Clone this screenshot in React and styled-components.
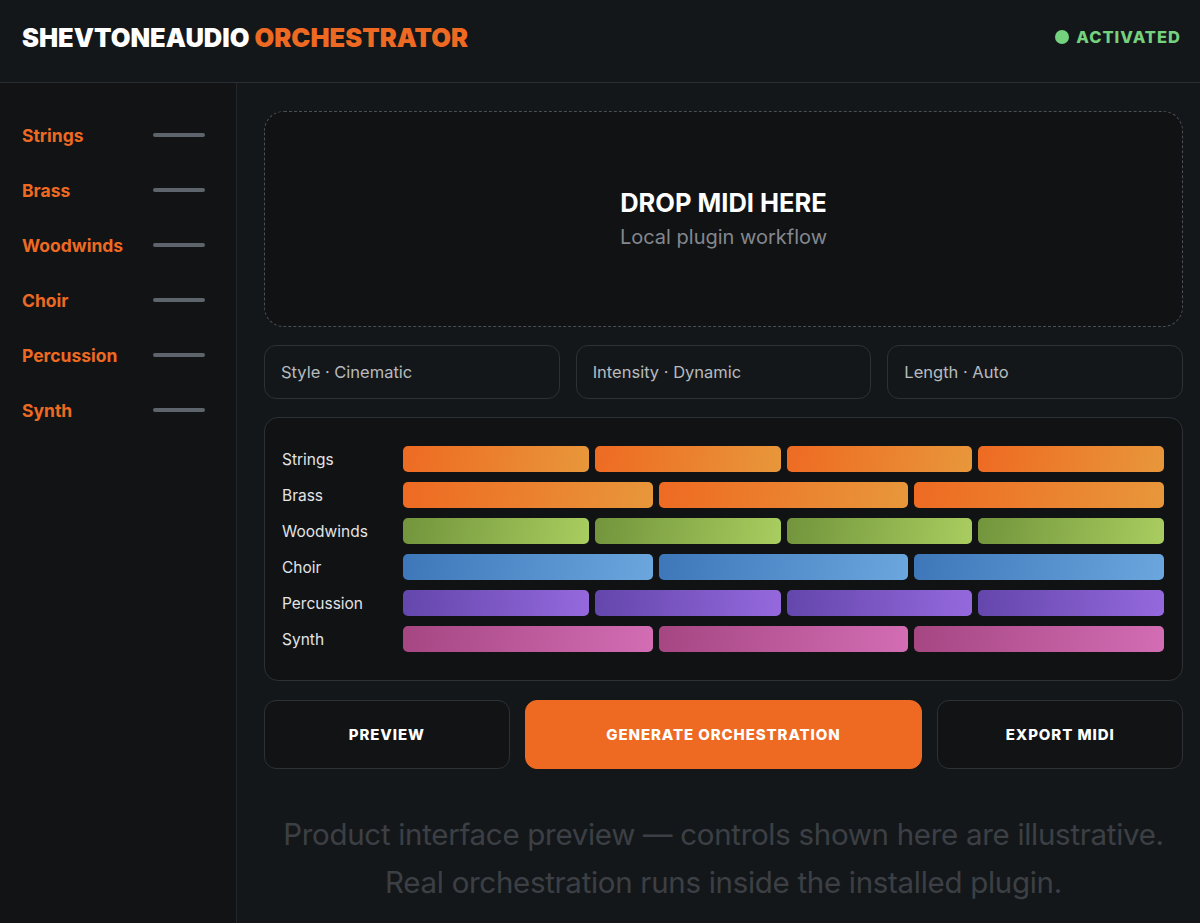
import React from 'react'
import styled, { createGlobalStyle } from 'styled-components'

const GlobalStyle = createGlobalStyle`
  html, body {
    margin: 0;
    padding: 0;
    background: #14171a;
  }
  * {
    box-sizing: border-box;
  }
`

const sections = ['Strings', 'Brass', 'Woodwinds', 'Choir', 'Percussion', 'Synth']

const lanes = [
  { name: 'Strings', parts: 4, from: '#ee6a22', to: '#e8973b' },
  { name: 'Brass', parts: 3, from: '#ee6a22', to: '#e8973b' },
  { name: 'Woodwinds', parts: 4, from: '#72943c', to: '#a9cd5f' },
  { name: 'Choir', parts: 3, from: '#3d77b9', to: '#6ba6de' },
  { name: 'Percussion', parts: 4, from: '#6346ab', to: '#9569dd' },
  { name: 'Synth', parts: 3, from: '#a54682', to: '#d36db4' },
]

const App = () => {
  return (
    <Page>
      <GlobalStyle />
      <Header>
        <Logo>
          SHEVTONEAUDIO <span>ORCHESTRATOR</span>
        </Logo>
        <Status>
          <Dot />
          ACTIVATED
        </Status>
      </Header>
      <Body>
        <Sidebar>
          {sections.map(name => (
            <SideItem key={name}>
              <SideLabel>{name}</SideLabel>
              <SideBar />
            </SideItem>
          ))}
        </Sidebar>
        <Main>
          <DropZone>
            <DropTitle>DROP MIDI HERE</DropTitle>
            <DropSub>Local plugin workflow</DropSub>
          </DropZone>
          <Selects>
            <Select>Style · Cinematic</Select>
            <Select>Intensity · Dynamic</Select>
            <Select>Length · Auto</Select>
          </Selects>
          <Tracks>
            {lanes.map(lane => (
              <Lane key={lane.name}>
                <LaneName>{lane.name}</LaneName>
                <Blocks parts={lane.parts}>
                  {Array.from({ length: lane.parts }).map((_, i) => (
                    <Block key={i} from={lane.from} to={lane.to} />
                  ))}
                </Blocks>
              </Lane>
            ))}
          </Tracks>
          <Actions>
            <Button>PREVIEW</Button>
            <Button primary>GENERATE ORCHESTRATION</Button>
            <Button>EXPORT MIDI</Button>
          </Actions>
          <Note>
            Product interface preview — controls shown here are illustrative.
            <br />
            Real orchestration runs inside the installed plugin.
          </Note>
        </Main>
      </Body>
    </Page>
  )
}

const Page = styled.div`
  width: 1200px;
  height: 923px;
  overflow: hidden;
  background: #14171a;
  font-family: Inter, 'Noto Sans', sans-serif;
  display: flex;
  flex-direction: column;
`

const Header = styled.header`
  height: 83px;
  flex-shrink: 0;
  display: flex;
  align-items: center;
  justify-content: space-between;
  padding: 0 19px 8px 22px;
  border-bottom: 1px solid #2a2d31;
`

const Logo = styled.div`
  font-size: 25.5px;
  font-weight: 900;
  color: #ffffff;
  letter-spacing: 0;

  span {
    color: #ee6a22;
  }
`

const Status = styled.div`
  display: flex;
  align-items: center;
  gap: 7px;
  font-size: 16.5px;
  font-weight: 800;
  color: #74d17d;
  letter-spacing: 1px;
`

const Dot = styled.span`
  width: 14px;
  height: 14px;
  border-radius: 50%;
  background: #74d17d;
`

const Body = styled.div`
  flex: 1;
  display: flex;
`

const Sidebar = styled.aside`
  width: 237px;
  flex-shrink: 0;
  background: #111315;
  border-right: 1px solid #23262a;
  padding: 40px 31px 0 22px;
  display: flex;
  flex-direction: column;
  gap: 31px;
`

const SideItem = styled.div`
  height: 24px;
  display: flex;
  align-items: center;
  justify-content: space-between;
`

const SideLabel = styled.span`
  font-size: 17.5px;
  font-weight: 700;
  color: #ee6a22;
`

const SideBar = styled.span`
  width: 52px;
  height: 4px;
  border-radius: 2px;
  background: #5e646b;
`

const Main = styled.main`
  flex: 1;
  padding: 28px 17px 0 27px;
  display: flex;
  flex-direction: column;
`

const DropZone = styled.div`
  height: 216px;
  border: 1.5px dashed #4a4f55;
  border-radius: 20px;
  background: #111214;
  display: flex;
  flex-direction: column;
  align-items: center;
  justify-content: center;
  gap: 7px;
  padding-bottom: 2px;
`

const DropTitle = styled.div`
  font-size: 25.5px;
  font-weight: 700;
  color: #ffffff;
`

const DropSub = styled.div`
  font-size: 20px;
  color: #83888e;
`

const Selects = styled.div`
  margin-top: 18px;
  display: grid;
  grid-template-columns: repeat(3, 1fr);
  gap: 16px;
`

const Select = styled.div`
  height: 54px;
  border: 1px solid #2d3135;
  border-radius: 12px;
  display: flex;
  align-items: center;
  padding: 0 16px;
  font-size: 16.5px;
  color: #b7bbbf;
`

const Tracks = styled.div`
  margin-top: 18px;
  height: 264px;
  border: 1px solid #2d3135;
  border-radius: 14px;
  background: #111214;
  padding: 28px 18px 0 17px;
  display: flex;
  flex-direction: column;
  gap: 10px;
`

const Lane = styled.div`
  height: 26px;
  display: flex;
  align-items: center;
`

const LaneName = styled.span`
  width: 121px;
  flex-shrink: 0;
  font-size: 15.5px;
  color: #e2e4e6;
`

const Blocks = styled.div`
  flex: 1;
  height: 100%;
  display: grid;
  grid-template-columns: repeat(${p => p.parts}, 1fr);
  gap: 6px;
`

const Block = styled.div`
  border-radius: 5px;
  background: linear-gradient(100deg, ${p => p.from}, ${p => p.to});
`

const Actions = styled.div`
  margin-top: 19px;
  display: grid;
  grid-template-columns: 1fr 1.62fr 1fr;
  gap: 15px;
`

const Button = styled.button`
  height: 69px;
  border-radius: 12px;
  border: 1px solid ${p => (p.primary ? '#ee6a22' : '#2d3135')};
  background: ${p => (p.primary ? '#ee6a22' : '#111315')};
  color: #ffffff;
  font-family: Inter, 'Noto Sans', sans-serif;
  font-size: 15px;
  font-weight: 800;
  letter-spacing: 0.9px;
  cursor: pointer;
`

const Note = styled.p`
  margin: 41px 0 0;
  text-align: center;
  font-size: 29.5px;
  line-height: 48px;
  color: #3c4045;
  letter-spacing: -0.3px;
`

export default App
